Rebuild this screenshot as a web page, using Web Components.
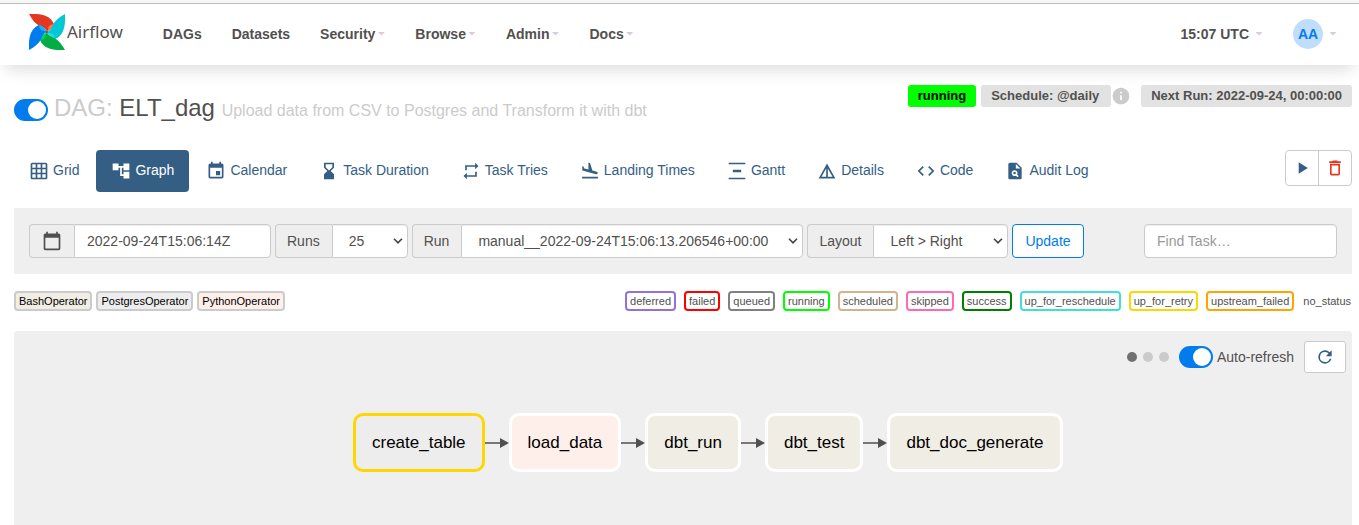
<!DOCTYPE html>
<html lang="en">
<head>
<meta charset="utf-8">
<meta name="viewport" content="width=device-width, initial-scale=1">
<title>ELT_dag - Graph - Airflow</title>
<style>
  html, body { margin: 0; }
  body { font: 14px/20px "Liberation Sans", Arial, sans-serif; color: #51504f; background: #fff; }
</style>
</head>
<body>
<airflow-app></airflow-app>

<script>
const BASE = '*, *::before, *::after { box-sizing: border-box; }';

function define(name, css, html, setup) {
  const template = document.createElement('template');
  template.innerHTML = `<style>${BASE}${css}</style>${html}`;
  customElements.define(name, class extends HTMLElement {
    constructor() {
      super();
      this.attachShadow({ mode: 'open' }).append(template.content.cloneNode(true));
    }
    connectedCallback() {
      if (setup && !this.ready) { this.ready = true; setup(this, this.shadowRoot); }
    }
  });
}

const ICONS = {
  grid: '<path d="M20 2H4c-1.1 0-2 .9-2 2v16c0 1.1.9 2 2 2h16c1.1 0 2-.9 2-2V4c0-1.1-.9-2-2-2zM8 20H4v-4h4v4zm0-6H4v-4h4v4zm0-6H4V4h4v4zm6 12h-4v-4h4v4zm0-6h-4v-4h4v4zm0-6h-4V4h4v4zm6 12h-4v-4h4v4zm0-6h-4v-4h4v4zm0-6h-4V4h4v4z"/>',
  tree: '<path d="M22 11V3h-7v3H9V3H2v8h7V8h2v10h4v3h7v-8h-7v3h-2V8h2v3z"/>',
  event: '<path d="M17 12h-5v5h5v-5zM16 1v2H8V1H6v2H5c-1.11 0-1.99.9-1.99 2L3 19c0 1.1.89 2 2 2h14c1.1 0 2-.9 2-2V5c0-1.1-.9-2-2-2h-1V1h-2zm3 18H5V8h14v11z"/>',
  hourglass: '<path d="M18 22l-.01-6L14 12l3.99-4.01L18 2H6v6l4 4-4 3.99V22h12zM8 7.5V4h8v3.5l-4 4-4-4z"/>',
  repeat: '<path d="M7 7h10v3l4-4-4-4v3H5v6h2V7zm10 10H7v-3l-4 4 4 4v-3h12v-6h-2v4z"/>',
  landing: '<path d="M2.5 19h19v2h-19v-2zm16.84-3.15c.8.21 1.62-.26 1.84-1.06.21-.8-.26-1.62-1.06-1.84l-5.31-1.42-2.76-9.02L10.12 2v8.28L5.15 8.95l-.93-2.32-1.45-.39v5.17l16.57 4.44z"/>',
  gantt: '<path d="M22 2v2H2V2h20zM7 10.5v3h10v-3H7zM2 20v2h20v-2H2z"/>',
  details: '<path d="M12 3 2 21h20L12 3zm1 5.92L18.6 19H13V8.92zm-2 0V19H5.4L11 8.92z"/>',
  code: '<path d="M9.4 16.6 4.8 12l4.6-4.6L8 6l-6 6 6 6 1.4-1.4zm5.2 0 4.6-4.6-4.6-4.6L16 6l6 6-6 6-1.4-1.4z"/>',
  audit: '<path d="M14 2H6c-1.1 0-1.99.9-1.99 2L4 20c0 1.1.89 2 1.99 2H18c1.1 0 2-.9 2-2V8l-6-6zm1.04 17.45-1.88-1.88c-1.33.71-3.01.53-4.13-.59-1.37-1.37-1.37-3.58 0-4.95 1.37-1.37 3.58-1.37 4.95 0 1.12 1.12 1.31 2.8.59 4.13l1.88 1.88-1.41 1.41zM13 9V3.5L18.5 9H13z"/><circle cx="11.5" cy="14.5" r="1.5"/>',
  play: '<path d="M8 5v14l11-7z"/>',
  trash: '<path d="M6 19c0 1.1.9 2 2 2h8c1.1 0 2-.9 2-2V7H6v12zM8 9h8v10H8V9zm7.5-5-1-1h-5l-1 1H5v2h14V4z"/>',
  calendar: '<path d="M20 3h-1V1h-2v2H7V1H5v2H4c-1.1 0-2 .9-2 2v16c0 1.1.9 2 2 2h16c1.1 0 2-.9 2-2V5c0-1.1-.9-2-2-2zm0 18H4V8h16v13z"/>',
  refresh: '<path d="M17.65 6.35A7.96 7.96 0 0 0 12 4a8 8 0 1 0 7.73 10h-2.08A6 6 0 1 1 12 6c1.66 0 3.14.69 4.22 1.78L13 11h7V4l-2.35 2.35z"/>',
  info: '<path d="M12 2C6.48 2 2 6.48 2 12s4.48 10 10 10 10-4.48 10-10S17.52 2 12 2zm1 15h-2v-6h2v6zm0-8h-2V7h2v2z"/>'
};

define('af-icon',
  ':host { display: inline-block; width: 20px; height: 20px; flex: none; } svg { display: block; width: 100%; height: 100%; fill: currentColor; }',
  '<svg viewBox="0 0 24 24" aria-hidden="true"></svg>',
  (el, root) => { root.querySelector('svg').innerHTML = ICONS[el.getAttribute('name')]; });

const blade = (angle, main, light) => `
  <g transform="rotate(${angle} 18 18)">
    <path fill="${main}" d="M18 18Q16.500 13.500 10.500 12C6 9.500 3 5.500 0 0C12 -.5 21 1 25 10Q20 13.500 18 18Z"/>
    <path fill="${light}" d="M19.500 12.500Q22 10 25 10Q25 14 18 18Q20 15 19.500 12.500Z"/>
  </g>`;

define('af-logo', `
  :host { display: block; margin-bottom: 4px; }
  a { display: flex; align-items: center; gap: 2px; color: #51504f; text-decoration: none; font: 17px/24px "Noto Sans", sans-serif; }
  svg { display: block; width: 36px; height: 36px; }`, `
  <a href="#"><svg viewBox="0 0 36 36" aria-hidden="true">
    ${blade(0, '#e43921', '#ff7557')}
    ${blade(90, '#00c7d4', '#11e1ee')}
    ${blade(180, '#00ad46', '#04d659')}
    ${blade(270, '#017cee', '#0cb6ff')}
    <circle cx="18" cy="18" r="1" fill="#51504f"/>
  </svg><span>Airflow</span></a>`);

define('af-nav-item', `
  :host { display: block; }
  a { display: flex; align-items: center; padding: 0 15px; font-weight: 700; color: #51504f; text-decoration: none; }
  i { display: none; flex: none; width: 8px; height: 4px; margin-left: var(--caret-gap, 2px); background: #dccadc; clip-path: polygon(0 0, 100% 0, 50% 100%); }
  :host([menu]) i { display: block; }`,
  '<a href="#"><slot></slot><i></i></a>');

define('af-navbar', `
  :host { display: block; position: relative; border-top: 3px solid #f7f7f7; background: #fff; box-shadow: 0 10px 16px -6px rgba(0,0,0,.15); }
  nav { display: flex; align-items: center; height: 62px; padding: 0 7px 2px 29px; border-top: 1px solid #bdbdbd; }
  .menu { display: flex; padding-left: 25px; }
  .right { display: flex; align-items: center; margin-left: auto; --caret-gap: 6px; }
  .avatar { display: block; width: 30px; height: 30px; border-radius: 50%; background: #c0defb; color: #017cee; line-height: 30px; text-align: center; }`, `
  <nav>
    <af-logo></af-logo>
    <div class="menu">
      <af-nav-item>DAGs</af-nav-item><af-nav-item>Datasets</af-nav-item>
      <af-nav-item menu>Security</af-nav-item><af-nav-item menu>Browse</af-nav-item>
      <af-nav-item menu>Admin</af-nav-item><af-nav-item menu>Docs</af-nav-item>
    </div>
    <div class="right">
      <af-nav-item menu>15:07 UTC</af-nav-item>
      <af-nav-item menu><span class="avatar">AA</span></af-nav-item>
    </div>
  </nav>`);

define('af-toggle', `
  :host { display: block; }
  label { display: flex; align-items: center; gap: 4px; }
  input { appearance: none; flex: none; display: flex; width: 34px; height: 22px; margin: 0; padding: 2px; border-radius: 11px; background: #cbcbcb; }
  input::before { content: ""; width: 18px; height: 18px; border-radius: 50%; background: #fff; }
  input:checked { background: #017cee; justify-content: flex-end; }`,
  '<label><input type="checkbox" checked><slot></slot></label>',
  (el, root) => { if (el.title) root.querySelector('input').setAttribute('aria-label', el.title); });

define('af-badge', `
  :host { display: block; padding: 0 10px; border-radius: 3px; background: #e2e2e2; font-weight: 700; font-size: 13px; line-height: 22px; white-space: nowrap; }
  :host([running]) { background: #0f0; color: #000; }`,
  '<slot></slot>');

define('af-dag-header', `
  :host { display: flex; align-items: flex-start; justify-content: space-between; height: 65px; }
  .title { display: flex; align-items: center; padding-top: 9px; gap: 6px; }
  h1 { margin: 0; font-weight: 400; font-size: 24px; line-height: 28px; color: #cbcbcb; }
  h1 a { color: #51504f; text-decoration: none; }
  h1 small { font-size: 16px; }
  .status { display: flex; align-items: center; gap: 5px; }
  .schedule { display: flex; align-items: center; margin-right: 5px; }
  .schedule af-badge { padding-right: 12px; }`, `
  <div class="title">
    <af-toggle title="Pause or unpause DAG"></af-toggle>
    <h1>DAG: <a href="#">ELT_dag</a> <small>Upload data from CSV to Postgres and Transform it with dbt</small></h1>
  </div>
  <div class="status">
    <af-badge running>running</af-badge>
    <div class="schedule"><af-badge>Schedule: @daily</af-badge><af-icon name="info" style="color:#cbcbcb"></af-icon></div>
    <af-badge>Next Run: 2022-09-24, 00:00:00</af-badge>
  </div>`);

define('af-tab', `
  :host { display: block; }
  a { display: flex; align-items: center; gap: 4px; height: 42px; padding: 0 15px 2px; border-radius: 4px; color: #345e84; text-decoration: none; white-space: nowrap; }
  :host([active]) a { background: #345e84; color: #fff; }
  af-icon { margin-top: 2px; }`,
  '<a href="#"><af-icon></af-icon><slot></slot></a>',
  (el, root) => {
    const icon = document.createElement('af-icon');
    icon.setAttribute('name', el.getAttribute('icon'));
    root.querySelector('af-icon').replaceWith(icon);
  });

define('af-tabs', `
  :host { display: flex; justify-content: space-between; align-items: flex-start; margin-bottom: 16px; }
  nav { display: flex; gap: 2px; }
  .actions { display: flex; border: 1px solid #cbcbcb; border-radius: 4px; background: #fff; }
  button { display: flex; align-items: center; justify-content: center; width: 32px; height: 34px; margin: 0; padding: 0; border: 0; background: none; color: #345e84; }
  button + button { width: 33px; border-left: 1px solid #cbcbcb; color: #e43921; }`, `
  <nav>
    <af-tab icon="grid">Grid</af-tab><af-tab icon="tree" active>Graph</af-tab>
    <af-tab icon="event">Calendar</af-tab><af-tab icon="hourglass">Task Duration</af-tab>
    <af-tab icon="repeat">Task Tries</af-tab><af-tab icon="landing">Landing Times</af-tab>
    <af-tab icon="gantt">Gantt</af-tab><af-tab icon="details">Details</af-tab>
    <af-tab icon="code">Code</af-tab><af-tab icon="audit">Audit Log</af-tab>
  </nav>
  <div class="actions">
    <button type="button" aria-label="Trigger DAG"><af-icon name="play"></af-icon></button>
    <button type="button" aria-label="Delete DAG"><af-icon name="trash"></af-icon></button>
  </div>`);

define('af-filters', `
  :host { display: block; background: #efefef; }
  form { display: flex; gap: 4px; padding: 16px 15px; }
  .group { display: flex; }
  label { display: flex; align-items: center; justify-content: center; padding: 0 12px 0 11px; border: 1px solid #cbcbcb; border-right: 0; border-radius: 4px 0 0 4px; background: #eee; }
  label af-icon { margin-left: 1px; }
  input, select, button { height: 34px; margin: 0; padding: 6px 12px; border: 1px solid #cbcbcb; border-radius: 4px; background-color: #fff; color: #51504f; font: inherit; box-shadow: inset 0 1px 1px rgba(0,0,0,.075); }
  select { appearance: none; padding: 6px 16px; background: #fff url('data:image/svg+xml,<svg xmlns="http://www.w3.org/2000/svg" width="10" height="6" fill="none" stroke="%23444" stroke-width="1.6"><path d="M1 .8l4 4 4-4"/></svg>') no-repeat right 4px center; }
  .group input, .group select { border-radius: 0 4px 4px 0; }
  button { border-color: #017cee; color: #017cee; box-shadow: none; }
  .search { width: 193px; margin-left: auto; }
  ::placeholder { color: #999; opacity: 1; }
  .date { width: 197px; } .count { width: 76px; } .run { width: 342px; } .layout { width: 135px; }`, `
  <form onsubmit="return false">
    <div class="group"><label for="date" aria-label="Base date"><af-icon name="calendar"></af-icon></label><input class="date" id="date" value="2022-09-24T15:06:14Z"></div>
    <div class="group"><label for="count">Runs</label><select class="count" id="count"><option>25</option></select></div>
    <div class="group"><label for="run">Run</label><select class="run" id="run"><option>manual__2022-09-24T15:06:13.206546+00:00</option></select></div>
    <div class="group"><label for="layout">Layout</label><select class="layout" id="layout"><option>Left &gt; Right</option></select></div>
    <button type="submit">Update</button>
    <input class="search" type="search" aria-label="Find Task" placeholder="Find Task…">
  </form>`);

define('af-chip', `
  :host { display: block; padding: 0 3px; border: 2px solid var(--line, #cbcbcb); border-radius: 4px; background: var(--fill, #fff); font-size: 11px; line-height: 16px; white-space: nowrap; }
  :host([plain]) { border-width: 2px 0; border-color: transparent; padding: 0 1px; }`,
  '<slot></slot>');

define('af-legend', `
  :host { display: flex; justify-content: space-between; padding: 17px 0 20px; }
  div { display: flex; }
  .operators { gap: 4px; color: #000; }
  .states { gap: 8px; }`, `
  <div class="operators">
    <af-chip style="--fill:#f0ede4">BashOperator</af-chip>
    <af-chip style="--fill:#ededed">PostgresOperator</af-chip>
    <af-chip style="--fill:#ffefeb">PythonOperator</af-chip>
  </div>
  <div class="states">
    <af-chip style="--line:mediumpurple">deferred</af-chip>
    <af-chip style="--line:red">failed</af-chip>
    <af-chip style="--line:gray">queued</af-chip>
    <af-chip style="--line:lime">running</af-chip>
    <af-chip style="--line:tan">scheduled</af-chip>
    <af-chip style="--line:hotpink">skipped</af-chip>
    <af-chip style="--line:green">success</af-chip>
    <af-chip style="--line:turquoise">up_for_reschedule</af-chip>
    <af-chip style="--line:gold">up_for_retry</af-chip>
    <af-chip style="--line:orange">upstream_failed</af-chip>
    <af-chip plain>no_status</af-chip>
  </div>`);

define('af-task', `
  :host { display: block; flex: none; padding: 1px 16px 0; border: 3px solid var(--line, #fff); border-radius: 10px; background: var(--fill, #f0ede4); color: #000; font-size: 17px; line-height: 52px; white-space: nowrap; }`,
  '<slot></slot>');

define('af-arrow',
  ':host { display: block; flex: none; width: 24px; } svg { display: block; width: 24px; height: 10px; }',
  '<svg viewBox="0 0 24 10" aria-hidden="true"><path d="M0 4.200h15v1.600H0zM15 0l9 5-9 5z" fill="#51504f"/></svg>');

define('af-graph', `
  :host { display: block; flex: 1; padding: 10px 6px 52px; border-radius: 4px 4px 0 0; background: #efefef; }
  .tools { display: flex; justify-content: flex-end; align-items: center; gap: 10px; }
  .dots { display: flex; gap: 6px; }
  .dots i { width: 10px; height: 10px; border-radius: 50%; background: #cbcbcb; }
  .dots i:first-child { background: #71706f; }
  button { display: flex; align-items: center; justify-content: center; width: 42px; height: 32px; padding: 0; border: 1px solid #cbcbcb; border-radius: 3px; background: #fff; color: #345e84; }
  .flow { display: flex; align-items: center; padding: 40px 0 0 333px; }`, `
  <div class="tools">
    <div class="dots"><i></i><i></i><i></i></div>
    <af-toggle>Auto-refresh</af-toggle>
    <button type="button" aria-label="Refresh"><af-icon name="refresh"></af-icon></button>
  </div>
  <div class="flow">
    <af-task style="--line:gold;--fill:#ededed">create_table</af-task><af-arrow></af-arrow>
    <af-task style="--fill:#ffefeb">load_data</af-task><af-arrow></af-arrow>
    <af-task>dbt_run</af-task><af-arrow></af-arrow>
    <af-task>dbt_test</af-task><af-arrow></af-arrow>
    <af-task>dbt_doc_generate</af-task>
  </div>`);

define('airflow-app', `
  :host { display: flex; flex-direction: column; min-height: 100vh; }
  main { display: flex; flex: 1; flex-direction: column; padding: 20px 7px 0 14px; }`, `
  <af-navbar></af-navbar>
  <main>
    <af-dag-header></af-dag-header>
    <af-tabs></af-tabs>
    <af-filters></af-filters>
    <af-legend></af-legend>
    <af-graph></af-graph>
  </main>`);
</script>
</body>
</html>
